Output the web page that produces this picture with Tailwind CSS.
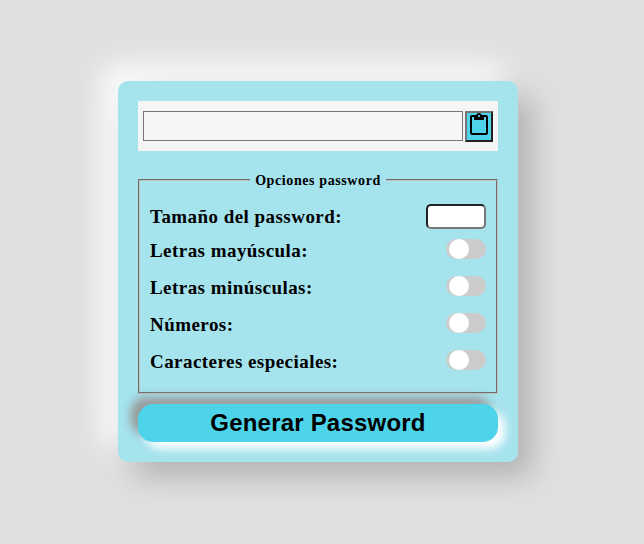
<!DOCTYPE html>
<html lang="es">
<head>
<meta charset="utf-8">
<title>Generador de password</title>
<script src="https://cdn.jsdelivr.net/npm/@tailwindcss/browser@4"></script>
</head>
<body class="h-[544px] overflow-hidden bg-[#e0e0e0] pt-[81px] text-black [font-family:'Liberation_Serif',serif]">
<main class="ml-[118px] flex h-[381px] w-[400px] flex-col rounded-[10px] bg-[#a5e3ed] p-5 shadow-[15px_15px_30px_#b3b3b3,-15px_-15px_30px_#fff]">
  <div class="flex h-[50px] shrink-0 items-center gap-[2px] bg-[#f5f5f5] px-[5px]">
    <input type="text" readonly class="h-[30px] w-[320px] border border-[#767676] bg-transparent">
    <button class="flex h-[31px] w-7 justify-center border-2 border-t-[#767676] border-l-[#767676] border-r-[#212121] border-b-[#212121] bg-[#4dd4ea]" aria-label="Copiar">
      <svg class="h-6 w-6 shrink-0" viewBox="0 0 24 24"><path d="M19 2h-4.180C14.400.84 13.300 0 12 0c-1.300 0-2.400.84-2.820 2H5c-1.100 0-2 .9-2 2v16c0 1.100.9 2 2 2h14c1.100 0 2-.9 2-2V4c0-1.100-.9-2-2-2zm-7 0c.55 0 1 .45 1 1s-.45 1-1 1-1-.45-1-1 .45-1 1-1zm7 18H5V4h2v3h10V4h2v16z"/></svg>
    </button>
  </div>
  <fieldset class="mt-5 h-[223px] shrink-0 border-2 border-[#c0c0c0] px-[10px] [border-style:groove]">
    <legend class="mx-auto h-[18px] px-[5px] text-[14px] leading-[20px] font-bold tracking-[0.6px] whitespace-nowrap">Opciones password</legend>
    <div class="mt-[15px] flex h-[25px] items-center justify-between">
      <label class="pt-px text-[19px] font-bold tracking-[0.45px]">Tamaño del password:</label>
      <input type="text" class="h-[25px] w-[60px] rounded-[5px] border-2 border-t-[#212121] border-l-[#212121] border-r-[#767676] border-b-[#767676] bg-white">
    </div>
    <div class="mt-[3px] flex h-[37px] items-center justify-between">
      <label class="pt-px text-[19px] font-bold tracking-[0.45px]">Letras mayúscula:</label>
      <span class="mb-[3px] flex h-5 w-10 rounded-full bg-[#ccc] pl-[3px]"><i class="h-5 w-5 rounded-full bg-white"></i></span>
    </div>
    <div class="flex h-[37px] items-center justify-between">
      <label class="pt-px text-[19px] font-bold tracking-[0.45px]">Letras minúsculas:</label>
      <span class="mb-[3px] flex h-5 w-10 rounded-full bg-[#ccc] pl-[3px]"><i class="h-5 w-5 rounded-full bg-white"></i></span>
    </div>
    <div class="flex h-[37px] items-center justify-between">
      <label class="pt-px text-[19px] font-bold tracking-[0.45px]">Números:</label>
      <span class="mb-[3px] flex h-5 w-10 rounded-full bg-[#ccc] pl-[3px]"><i class="h-5 w-5 rounded-full bg-white"></i></span>
    </div>
    <div class="flex h-[37px] items-center justify-between">
      <label class="pt-px text-[19px] font-bold tracking-[0.45px]">Caracteres especiales:</label>
      <span class="mb-[3px] flex h-5 w-10 rounded-full bg-[#ccc] pl-[3px]"><i class="h-5 w-5 rounded-full bg-white"></i></span>
    </div>
  </fieldset>
  <button class="mt-[10px] h-[38px] shrink-0 rounded-[15px] bg-[#4dd4ea] text-[24px] leading-[38px] font-bold tracking-[0.2px] shadow-[7px_7px_10px_#fff,-7px_-7px_10px_#999] [font-family:'Liberation_Sans',sans-serif]">Generar Password</button>
</main>
</body>
</html>
